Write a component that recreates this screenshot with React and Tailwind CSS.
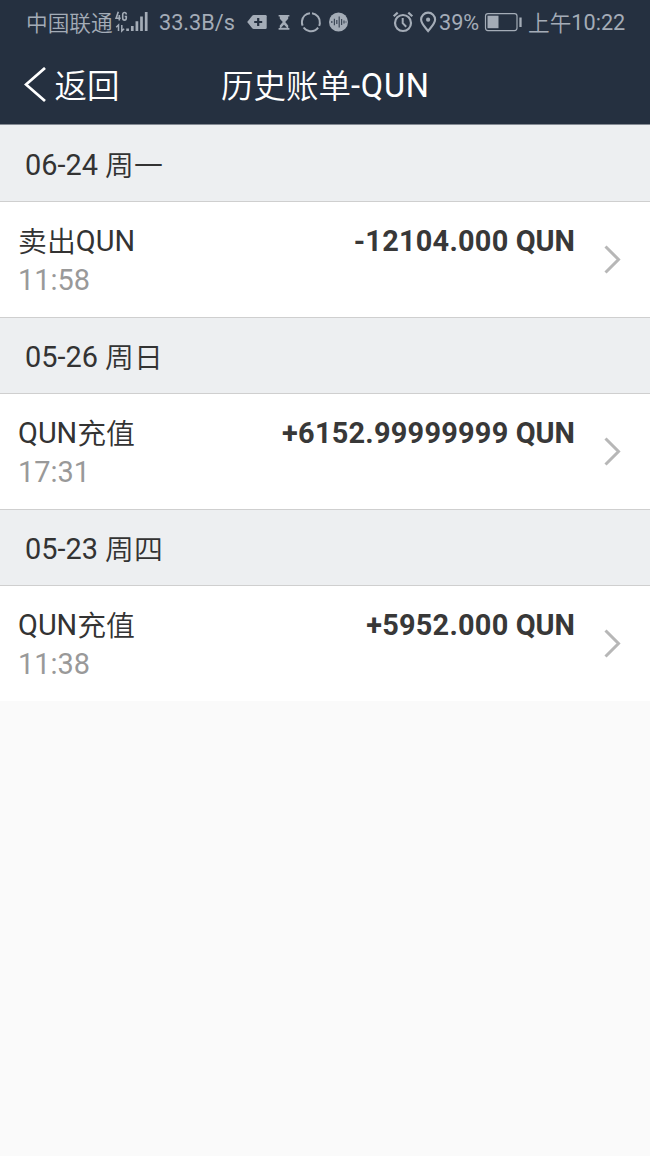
import React from "react";

const groups = [
  { date: "06-24 周一", label: "卖出QUN", time: "11:58", amount: "-12104.000" },
  { date: "05-26 周日", label: "QUN充值", time: "17:31", amount: "+6152.99999999" },
  { date: "05-23 周四", label: "QUN充值", time: "11:38", amount: "+5952.000" },
];

// Sets Han characters in a lighter CJK face while Latin text stays in Roboto.
function Mixed({ children }) {
  return children.split(/([\u4e00-\u9fff]+)/).map((part, i) =>
    /[\u4e00-\u9fff]/.test(part) ? (
      <span key={i} className="font-['Noto_Sans_CJK_SC',sans-serif] font-[350] leading-[0] align-[-1px]">{part}</span>
    ) : (
      part
    )
  );
}

function StatusBar() {
  return (
    <div className="flex h-[46px] items-center text-[21.67px] leading-[46px] text-[#a4acb7] whitespace-nowrap">
      <div className="ml-[26px] w-[88px]"><Mixed>中国联通</Mixed></div>
      <svg className="w-[36px] h-[24px]" viewBox="114 11 36 24" fill="none" stroke="currentColor">
        <path d="M118.300 11.800l-2.200 6.500h4.600M119.300 15v5.500" strokeWidth="1.600" />
        <path d="M126.300 14.600c0-2.800-3.600-2.800-3.600 0v3.400c0 2.800 3.600 2.800 3.600 0v-1.500h-1.600" strokeWidth="1.600" />
        <path d="M118.500 31v-6l-2.300 2.200M121.800 25v6l2.300-2.200" strokeWidth="1.500" />
        <path d="M127.600 28.500V31M132.300 26v5M136.900 21.300V31M141.500 16.500V31M146.200 12v19" strokeWidth="2.700" />
      </svg>
      <div className="ml-[9px] w-[87px]">33.3B/s</div>
      <svg className="w-[104px] h-[24px]" viewBox="246 11 104 24" fill="none" stroke="currentColor">
        <path d="M247.200 22l5-6.300q.7-.7 1.500-.7h11.800q1.200 0 1.200 1.200v11.600q0 1.200-1.200 1.200h-11.800q-.8 0-1.500-.7z" fill="currentColor" stroke="none" />
        <path d="M258.200 18v8M254.200 22h8" stroke="#253040" strokeWidth="2.200" />
        <path d="M278.600 15h10.800v1.600h-1.200v2.200l-3 3.200 3 3.400v2.600h1.200v1.700h-10.800V28h1.200v-2.600l3-3.400-3-3.200v-2.200h-1.200z" fill="currentColor" stroke="none" />
        <path d="M281 27.800l3-3 3 3z" fill="#253040" stroke="none" />
        <circle cx="310.900" cy="22.200" r="9" pathLength="360" strokeDasharray="107 13" transform="rotate(-83 310.900 22.200)" strokeWidth="2" />
        <circle cx="338.500" cy="22" r="9.500" fill="currentColor" stroke="none" />
        <path d="M331.800 21v2M334.400 18.700v6.600M336.800 20v4M339.200 16.500v11M341.600 19v6M344 20.500v3M346 21.400v1.200" stroke="#3d4857" strokeWidth="1.200" />
      </svg>
      <svg className="ml-[41px] w-[48px] h-[24px]" viewBox="391 11 48 24" fill="none" stroke="currentColor">
        <circle cx="403" cy="23" r="8" strokeWidth="2.200" />
        <path d="M402.700 18v5.200l3.500 3.600" strokeWidth="2" />
        <path d="M393.700 16.200l4-3.600M412.300 16.200l-4-3.600" strokeWidth="2.200" />
        <path d="M428.100 31c-3.400-4.200-7-7.300-7-11.400a7 7 0 0 1 14 0c0 4.100-3.600 7.200-7 11.400z" strokeWidth="2.100" />
        <circle cx="428.100" cy="19.700" r="2.100" fill="currentColor" stroke="none" />
      </svg>
      <div className="w-[45px]">39%</div>
      <svg className="w-[40px] h-[24px]" viewBox="484 11 40 24" fill="none" stroke="currentColor">
        <rect x="485.500" y="13.600" width="31.500" height="17" rx="2.500" strokeWidth="1.200" />
        <path d="M487.500 15.700h11v12.500h-11z" fill="currentColor" stroke="none" />
        <path d="M520.500 17.500v9.500" strokeWidth="2.300" />
      </svg>
      <div className="ml-[4px]"><Mixed>上午10:22</Mixed></div>
    </div>
  );
}

function Header() {
  return (
    <header className="h-[124px] bg-[#253040] text-white">
      <StatusBar />
      <nav className="flex h-[78px] items-center text-[32.5px] leading-[78px] whitespace-nowrap">
        <svg className="ml-[24px] w-[22px] h-[36px]" viewBox="0 0 22 36" fill="none" stroke="currentColor" strokeWidth="2.800">
          <path d="M21 1L2 17.500L21 34" />
        </svg>
        <a className="ml-[8.5px] w-[166.5px] pt-[2px]"><Mixed>返回</Mixed></a>
        <h1 className="pt-[2px]"><Mixed>历史账单</Mixed><span className="tracking-[0.8px]">-QUN</span></h1>
      </nav>
    </header>
  );
}

function Entry({ label, time, amount }) {
  return (
    <div className="flex h-[115px] items-center justify-between bg-white pl-[18px] pr-[29px] whitespace-nowrap">
      <div className="flex-1 pt-[2px] leading-[39px]">
        <div className="flex justify-between text-[#333333]">
          <span><Mixed>{label}</Mixed></span>
          <span className="font-bold text-[#383838]"><span className="tracking-[0.24px]">{amount}</span> QUN</span>
        </div>
        <div className="text-[#999999]">{time}</div>
      </div>
      <svg className="ml-[29px] w-[17px] h-[30px]" viewBox="0 0 17 30" fill="none" stroke="#b7b7b7" strokeWidth="3">
        <path d="M1.500 1.500L14.500 14.500L1.500 27.500" />
      </svg>
    </div>
  );
}

export default function App() {
  return (
    <main className="min-h-[1156px] w-[650px] bg-[#fafafa] text-[28.9px] font-[Roboto,'Noto_Sans_CJK_SC',sans-serif]">
      <Header />
      {groups.map((g, i) => (
        <section key={g.date}>
          <h2
            className={`${i === 0 ? "h-[78px] border-t-[#858b94]" : "h-[77px] border-t-[#cfcfcf]"} flex flex-col justify-end border-y border-b-[#cfcfcf] bg-[#edeff1] pl-[25px] leading-[71px] text-[#333333]`}
          >
            <span><Mixed>{g.date}</Mixed></span>
          </h2>
          <Entry {...g} />
        </section>
      ))}
    </main>
  );
}
